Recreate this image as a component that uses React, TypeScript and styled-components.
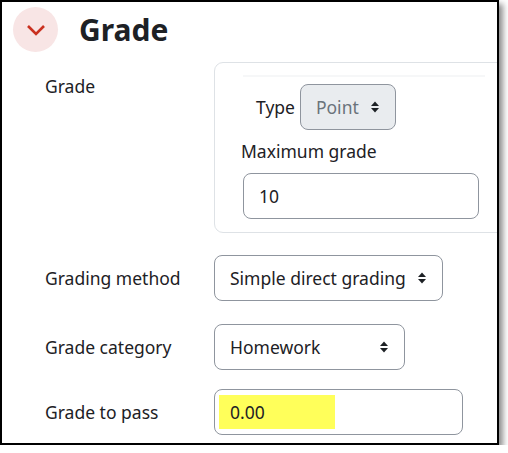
import React from "react";
import styled, { createGlobalStyle } from "styled-components";

const Global = createGlobalStyle`
  html, body { margin: 0; padding: 0; background: #fff; }
  body { font-family: "Noto Sans", "Open Sans", sans-serif; color: #1d2125; }
  * { box-sizing: border-box; }
`;

const Frame = styled.div`
  width: 499px;
  height: 445px;
  border: 2px solid #000;
  background: #fff;
  overflow: hidden;
  box-shadow: 4px 4px 6px rgba(0, 0, 0, 0.45);
  padding: 5px 0 0 11px;
`;

const Header = styled.div`
  display: flex;
  align-items: center;
  gap: 21px;
`;

const Toggle = styled.div`
  width: 45px;
  height: 45px;
  border-radius: 50%;
  background: #f8e5e5;
  display: flex;
  align-items: center;
  justify-content: center;
`;

const Title = styled.h3`
  margin: 0;
  font-size: 30px;
  font-weight: 700;
  line-height: 1;
`;

const Rows = styled.div`
  display: grid;
  grid-template-columns: 169px auto;
  margin-left: 32px;
  margin-top: 8px;
`;

const Label = styled.div<{ $top: number }>`
  font-size: 17.5px;
  line-height: 24px;
  padding-top: ${(p) => p.$top}px;
  white-space: nowrap;
`;

const Cell = styled.div<{ $mt?: number }>`
  margin-top: ${(p) => p.$mt ?? 0}px;
`;

const Fieldset = styled.div`
  width: 320px;
  height: 171px;
  border: 1px solid #dee2e6;
  border-radius: 9px;
  padding: 12px 0 0 26px;
`;

const Faint = styled.div`
  height: 2px;
  width: 242px;
  margin-left: 2px;
  background: #f6f7f8;
`;

const TypeRow = styled.div`
  display: flex;
  align-items: center;
  gap: 5px;
  margin: 7px 0 0 15px;
`;

const SmallLabel = styled.span`
  font-size: 17.5px;
  line-height: 24px;
`;

const Select = styled.div<{ $w: number; $disabled?: boolean }>`
  width: ${(p) => p.$w}px;
  height: 46px;
  border: 1px solid #8f959e;
  border-radius: 8px;
  background: ${(p) => (p.$disabled ? "#e9ecef" : "#fff")};
  color: ${(p) => (p.$disabled ? "#6a737b" : "#1d2125")};
  display: flex;
  align-items: center;
  justify-content: space-between;
  padding: 0 15px 0 15px;
  font-size: 17.5px;
`;

const Input = styled.div<{ $w: number }>`
  width: ${(p) => p.$w}px;
  height: 46px;
  border: 1px solid #8f959e;
  border-radius: 8px;
  background: #fff;
  display: flex;
  align-items: center;
  padding: 0 4px;
  font-size: 17.5px;
`;

const Value = styled.span<{ $hl?: boolean }>`
  display: flex;
  align-items: center;
  height: 34px;
  padding-left: 11px;
  width: ${(p) => (p.$hl ? "116px" : "auto")};
  background: ${(p) => (p.$hl ? "#ffff5a" : "transparent")};
`;

const MaxLabel = styled.div`
  font-size: 17.5px;
  line-height: 24px;
  margin: 9px 0 0 0;
`;

const MaxInput = styled.div`
  margin: 10px 0 0 2px;
`;

const Arrows = () => (
  <svg width="10" height="14" viewBox="0 0 10 14">
    <path d="M1 6 L5 1.5 L9 6 Z" fill="#1d2125" />
    <path d="M1 8 L5 12.5 L9 8 Z" fill="#1d2125" />
  </svg>
);

export default function App() {
  return (
    <>
      <Global />
      <Frame>
        <Header>
          <Toggle>
            <svg width="20" height="12" viewBox="0 0 20 12">
              <path d="M2 2 L10 10 L18 2" fill="none" stroke="#ca3120" strokeWidth="2.6" />
            </svg>
          </Toggle>
          <Title>Grade</Title>
        </Header>
        <Rows>
          <Label $top={14}>Grade</Label>
          <Cell $mt={2}>
            <Fieldset>
              <Faint />
              <TypeRow>
                <SmallLabel>Type</SmallLabel>
                <Select $w={96} $disabled>
                  Point
                  <Arrows />
                </Select>
              </TypeRow>
              <MaxLabel>Maximum grade</MaxLabel>
              <MaxInput>
                <Input $w={236}>
                  <Value>10</Value>
                </Input>
              </MaxInput>
            </Fieldset>
          </Cell>
          <Label $top={33}>Grading method</Label>
          <Cell $mt={22}>
            <Select $w={229}>
              Simple direct grading
              <Arrows />
            </Select>
          </Cell>
          <Label $top={34}>Grade category</Label>
          <Cell $mt={23}>
            <Select $w={191}>
              Homework
              <Arrows />
            </Select>
          </Cell>
          <Label $top={30}>Grade to pass</Label>
          <Cell $mt={19}>
            <Input $w={249}>
              <Value $hl>0.00</Value>
            </Input>
          </Cell>
        </Rows>
      </Frame>
    </>
  );
}
